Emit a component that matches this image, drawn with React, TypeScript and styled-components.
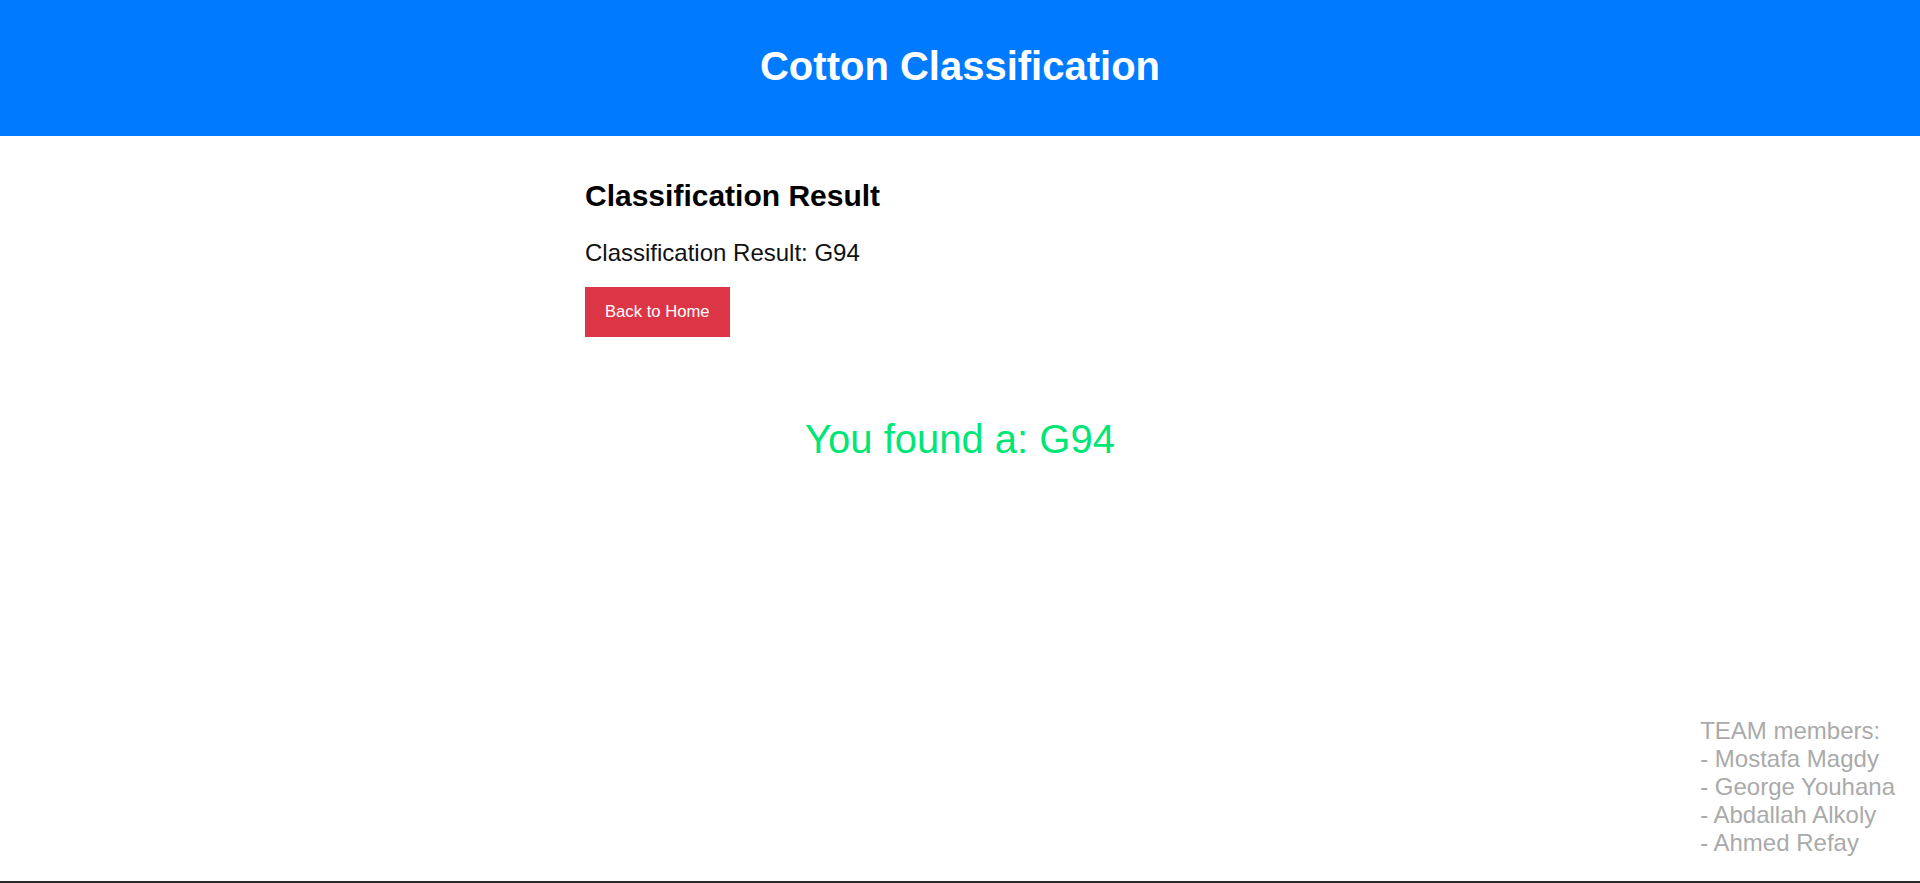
import React from "react";
import styled, { createGlobalStyle } from "styled-components";

const GlobalStyle = createGlobalStyle`
  body {
    margin: 0;
    font-family: "Liberation Sans", Arial, sans-serif;
    background: #fff;
  }
`;

const team = ["Mostafa Magdy", "George Youhana", "Abdallah Alkoly", "Ahmed Refay"];

function App() {
  const result = "G94";

  return (
    <>
      <GlobalStyle />
      <Page>
        <Header>
          <Title>Cotton Classification</Title>
        </Header>

        <Container>
          <ResultHeading>Classification Result</ResultHeading>
          <ResultText>Classification Result: {result}</ResultText>
          <HomeButton>Back to Home</HomeButton>
        </Container>

        <Found>You found a: {result}</Found>

        <Footer>
          <TeamList>
            <TeamLine>TEAM members:</TeamLine>
            {team.map((name) => (
              <TeamLine key={name}>- {name}</TeamLine>
            ))}
          </TeamList>
        </Footer>
      </Page>
    </>
  );
}

const Page = styled.div`
  min-height: 100vh;
  box-sizing: border-box;
  display: flex;
  flex-direction: column;
  border-bottom: 2px solid #2b2b2b;
`;
const Header = styled.header`
  height: 136px;
  box-sizing: border-box;
  padding-bottom: 4px;
  background-color: #007bff;
  display: flex;
  align-items: center;
  justify-content: center;
`;
const Title = styled.h1`
  margin: 0;
  color: #fff;
  font-size: 40px;
  font-weight: 700;
`;
const Container = styled.main`
  width: 750px;
  margin: 0 auto;
  padding-top: 43px;
  display: flex;
  flex-direction: column;
  align-items: flex-start;
`;
const ResultHeading = styled.h2`
  margin: 0;
  font-size: 30px;
  font-weight: 700;
  color: #000;
`;
const ResultText = styled.p`
  margin: 26px 0 0;
  font-size: 24px;
  color: #111;
`;
const HomeButton = styled.button`
  margin-top: 20px;
  padding: 15px 20px;
  border: none;
  border-radius: 0;
  background-color: #dc3545;
  color: #fff;
  font-family: "Liberation Sans", Arial, sans-serif;
  font-size: 16.67px;
  line-height: 20px;
  cursor: pointer;
`;
const Found = styled.div`
  margin-top: 80px;
  text-align: center;
  font-size: 40px;
  color: #00e676;
`;
const Footer = styled.footer`
  margin-top: auto;
  display: flex;
  justify-content: flex-end;
  padding: 0 25px 24px 0;
`;
const TeamList = styled.div`
  display: flex;
  flex-direction: column;
`;
const TeamLine = styled.div`
  font-size: 24px;
  color: #aaa;
  white-space: nowrap;
`;

export default App;
